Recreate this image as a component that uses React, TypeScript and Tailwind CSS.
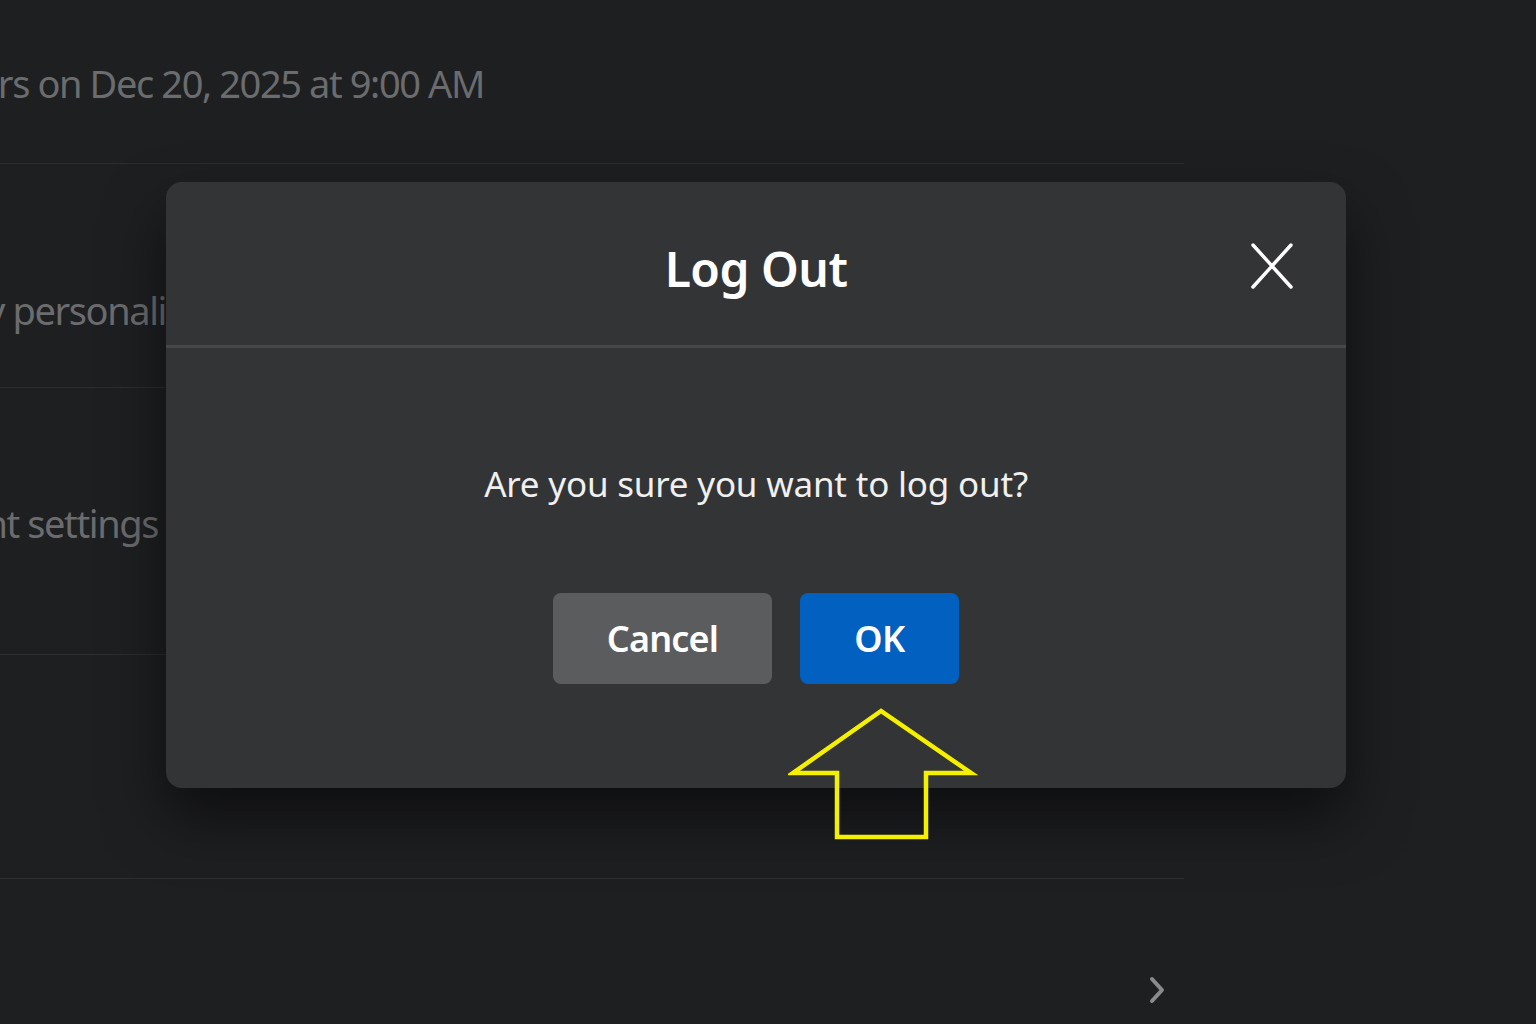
import React from "react";

const font = { fontFamily: '"Noto Sans", "Open Sans", sans-serif' };

function Row({ h, children, last }: { h: string; children?: React.ReactNode; last?: boolean }) {
  return (
    <div className={`${h} w-[1184px] overflow-hidden flex items-center ${last ? "" : "border-b border-[#2c2d2f]"}`}>
      {children}
    </div>
  );
}

export default function App() {
  return (
    <div className="relative w-[1536px] h-[1024px] overflow-hidden bg-[#1e1f21]" style={font}>
      <div className="flex flex-col">
        <Row h="h-[164px]">
          <div className="w-[484px] flex justify-end overflow-hidden pt-[4px]">
            <span className="whitespace-nowrap text-[38px] tracking-[-1.4px] text-[#6b6c6e]">Reminders on Dec 20, 2025 at 9:00 AM</span>
          </div>
        </Row>
        <Row h="h-[224px]">
          <div className="overflow-hidden pt-[70px]">
            <span className="whitespace-nowrap text-[38px] tracking-[-1.4px] text-[#6b6c6e] ml-[-14px] block">y personalized recommendations</span>
          </div>
        </Row>
        <Row h="h-[267px]">
          <div className="w-[158px] flex justify-end overflow-hidden pt-[4px]">
            <span className="whitespace-nowrap text-[38px] tracking-[-1.4px] text-[#6b6c6e]">Account settings</span>
          </div>
        </Row>
        <Row h="h-[224px]" />
        <div className="h-[145px] w-[1184px] flex items-end justify-end pr-[18px] pb-[19px]">
          <svg width="18" height="30" viewBox="0 0 18 30" fill="none">
            <path d="M4 4 L14 15 L4 26" stroke="#8a8b8d" strokeWidth="4" strokeLinecap="round" strokeLinejoin="round" />
          </svg>
        </div>
      </div>

      <div className="absolute left-[166px] top-[182px] w-[1180px] h-[606px] rounded-[16px] bg-[#333436] shadow-[0_30px_60px_rgba(0,0,0,0.55)] flex flex-col">
        <div className="h-[166px] border-b-[3px] border-[#47484a] relative flex items-center justify-center">
          <span className="text-[48px] font-semibold text-white tracking-[-0.5px] mt-[10px]">Log Out</span>
          <button className="absolute right-[52px] top-[60px] w-[44px] h-[48px] flex items-center justify-center">
            <svg width="44" height="48" viewBox="0 0 44 48" fill="none">
              <path d="M3 3 L41 45 M41 3 L3 45" stroke="#ffffff" strokeWidth="3.5" strokeLinecap="round" />
            </svg>
          </button>
        </div>
        <div className="flex flex-col items-center pt-[118px]">
          <p className="text-[35px] text-[#f0f0f0] leading-none tracking-[-0.2px]">Are you sure you want to log out?</p>
          <div className="flex gap-[28px] mt-[92px]">
            <button className="w-[219px] h-[91px] rounded-[8px] bg-[#5b5c5e] text-white text-[36px] font-semibold tracking-[-0.8px]">Cancel</button>
            <button className="w-[159px] h-[91px] rounded-[8px] bg-[#0160c0] text-white text-[36px] font-semibold tracking-[-0.5px]">OK</button>
          </div>
        </div>
      </div>

      <svg className="absolute left-[788px] top-[705px]" width="190" height="138" viewBox="0 0 190 138" fill="none">
        <path d="M93 6 L5 68 L49 68 L49 132 L138 132 L138 68 L183 68 Z" stroke="#f5f000" strokeWidth="4.5" strokeLinejoin="miter" />
      </svg>
    </div>
  );
}
